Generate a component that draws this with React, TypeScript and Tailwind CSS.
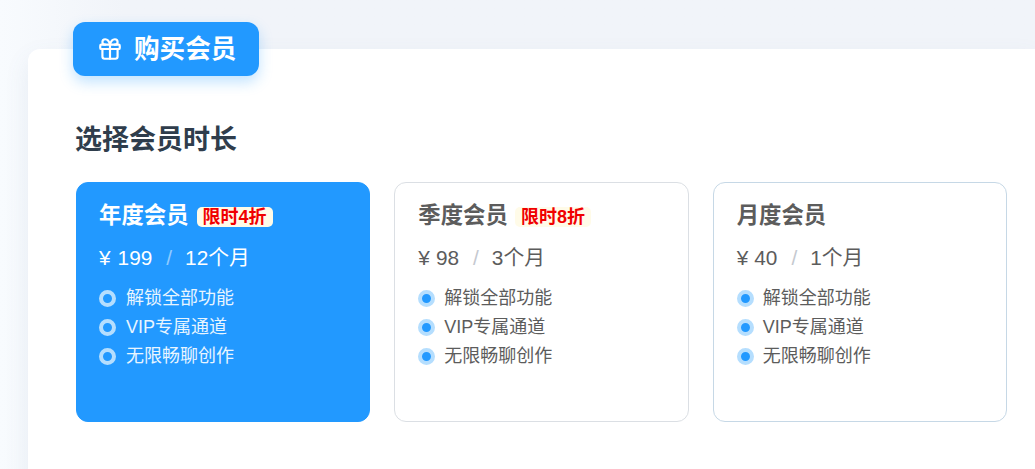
import { Gift } from 'lucide-react';

const plans = [
  { name: '年度会员', badge: '限时4折', price: '199', months: '12个月', active: true, border: 'border-[#2299ff]' },
  { name: '季度会员', badge: '限时8折', price: '98', months: '3个月', active: false, border: 'border-[#dbdfe4]' },
  { name: '月度会员', badge: '', price: '40', months: '1个月', active: false, border: 'border-[#c6d8e6]' },
];

const features = ['解锁全部功能', 'VIP专属通道', '无限畅聊创作'];

function PlanCard({ plan }: { plan: (typeof plans)[number] }) {
  const { active } = plan;
  return (
    <div
      className={`h-[240px] rounded-[12px] border pt-[17px] ${plan.border} ${
        active ? 'bg-[#2299ff] pl-[22px] text-white' : 'bg-white pl-[23px] text-[#5c5c5c]'
      }`}
    >
      <div className="flex h-[32px] items-center">
        <span className="text-[22.4px] leading-[32px] font-bold">{plan.name}</span>
        {plan.badge && (
          <span
            className={`mt-[2px] rounded-[5px] bg-[#fffbe8] px-[6px] text-[18px] leading-[20px] font-bold text-[#f00000] ${
              active ? 'ml-[8px]' : 'ml-[7px]'
            }`}
          >
            {plan.badge}
          </span>
        )}
      </div>
      <div className="mt-[11px] flex h-[30px] items-center text-[20.8px] leading-[30px]">
        <span>¥</span>
        <span className={active ? 'ml-[7px]' : 'ml-[6px]'}>{plan.price}</span>
        <span className={`ml-[14px] mr-[13px] ${active ? 'text-white/50' : 'text-[#c5c9d0]'}`}>/</span>
        <span>{plan.months}</span>
      </div>
      <ul className="mt-[12px] flex flex-col gap-[3px]">
        {features.map((f) => (
          <li key={f} className="flex h-[26px] items-center text-[18px] leading-[26px]">
            <span
              className={`box-border h-[17px] w-[17px] shrink-0 rounded-full border-[4px] border-[#b5defe] bg-[#2299ff] ${
                active ? 'mr-[10px]' : 'mr-[9px]'
              }`}
            />
            <span className={active ? 'text-[#e8f5ff]' : ''}>{f}</span>
          </li>
        ))}
      </ul>
    </div>
  );
}

export default function App() {
  return (
    <div
      className="relative h-[469px] w-[1035px] overflow-hidden bg-gradient-to-r from-[#f8fbfe] to-[#f1f4f9] to-[12%] pl-[28px] pt-[49px]"
      style={{ fontFamily: '"Liberation Sans", "Noto Sans CJK SC", sans-serif' }}
    >
      <div className="absolute left-[73px] top-[22px] z-10 flex h-[54px] w-[186px] items-center rounded-[12px] bg-[#2299ff] pl-[24px] text-white shadow-[0_6px_14px_rgba(34,153,255,0.28)]">
        <Gift size={26} strokeWidth={2} />
        <span className="ml-[11px] text-[25.6px] leading-[34px] font-bold">购买会员</span>
      </div>
      <div className="h-[440px] rounded-tl-[12px] bg-white pl-[48px] pr-[28px] pt-[73px] shadow-[0_10px_24px_rgba(90,120,160,0.1)]">
        <h2 className="-ml-[1px] text-[27px] leading-[36px] font-bold text-[#2f3d4c]">选择会员时长</h2>
        <div className="mt-[24px] grid grid-cols-3 gap-[24px]">
          {plans.map((p) => (
            <PlanCard key={p.name} plan={p} />
          ))}
        </div>
      </div>
    </div>
  );
}
